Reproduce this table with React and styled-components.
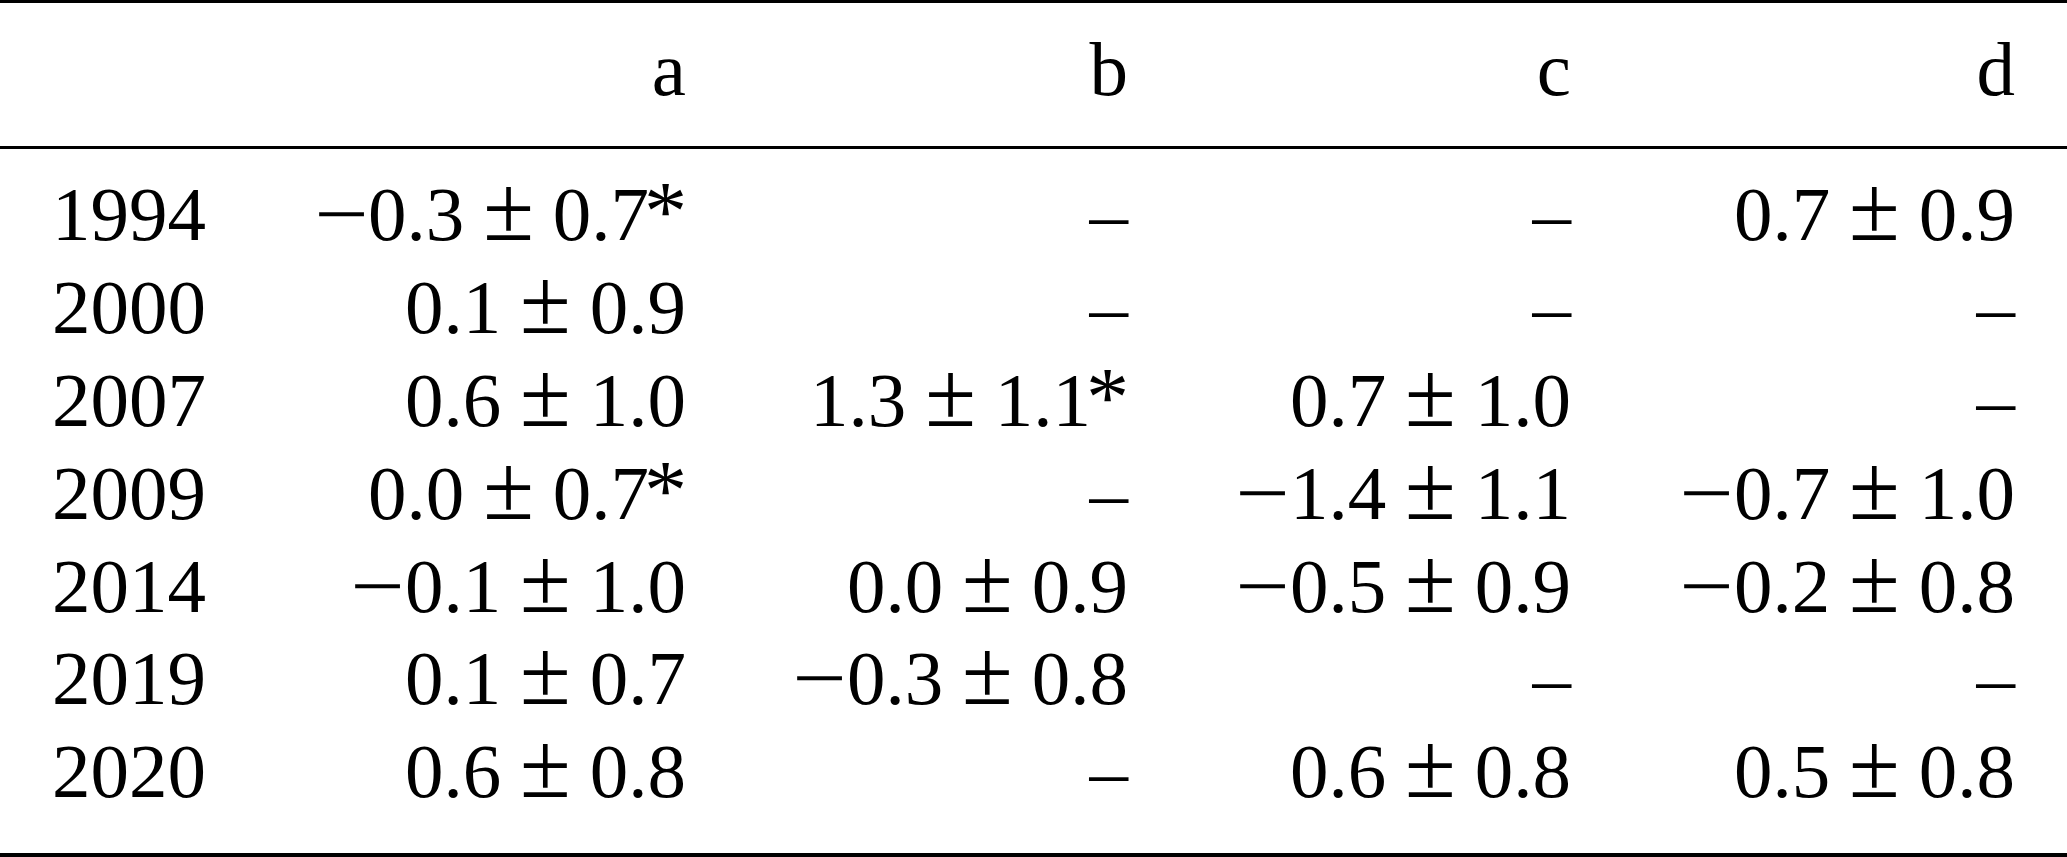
import React from "react";
import styled, { createGlobalStyle } from "styled-components";

const Global = createGlobalStyle`
  html, body { margin: 0; padding: 0; background: #fff; }
  body {
    font-family: "Liberation Serif", "Times New Roman", serif;
    color: #000;
  }
`;

const Table = styled.div`
  width: 100%;
  box-sizing: border-box;
  border-top: 3px solid #000;
  border-bottom: 4px solid #000;
  font-size: 77px;
  line-height: 92.8px;
`;

const Head = styled.div`
  padding: 20px 52px 30px;
  border-bottom: 3px solid #000;
`;

const Body = styled.div`
  padding: 19.6px 52px 35px;
`;

const Row = styled.div`
  display: grid;
  grid-template-columns: 192px 442px 442px 443px 444px;
  white-space: nowrap;
`;

const Cell = styled.div`
  text-align: ${(p) => (p.$align === "left" ? "left" : "right")};
`;

const Minus = styled.span`
  display: inline-block;
  line-height: 0;
  transform: scaleX(1.25);
  transform-origin: right center;
`;

const PM = styled.span`
  font-size: 1.2em;
  line-height: 0;
  margin: 0 0.205em;
`;

const Star = styled.span`
  display: inline-block;
  line-height: 0;
  transform: scale(1.12, 1.1);
  transform-origin: left 0.3em;
  margin-left: -0.06em;
  margin-right: 0.04em;
`;

const Dash = styled.span``;

const data = [
  ["1994", ["-0.3", "0.7", true], null, null, ["0.7", "0.9"]],
  ["2000", ["0.1", "0.9"], null, null, null],
  ["2007", ["0.6", "1.0"], ["1.3", "1.1", true], ["0.7", "1.0"], null],
  ["2009", ["0.0", "0.7", true], null, ["-1.4", "1.1"], ["-0.7", "1.0"]],
  ["2014", ["-0.1", "1.0"], ["0.0", "0.9"], ["-0.5", "0.9"], ["-0.2", "0.8"]],
  ["2019", ["0.1", "0.7"], ["-0.3", "0.8"], null, null],
  ["2020", ["0.6", "0.8"], null, ["0.6", "0.8"], ["0.5", "0.8"]],
];

function Value({ v }) {
  if (!v) return <Dash>–</Dash>;
  const [m, e, star] = v;
  const neg = m.startsWith("-");
  return (
    <>
      {neg && <Minus>{"\u2212"}</Minus>}
      {neg ? m.slice(1) : m}
      <PM>±</PM>
      {e}
      {star && <Star>*</Star>}
    </>
  );
}

export default function App() {
  return (
    <>
      <Global />
      <Table>
        <Head>
          <Row>
            <Cell $align="left" />
            <Cell>a</Cell>
            <Cell>b</Cell>
            <Cell>c</Cell>
            <Cell>d</Cell>
          </Row>
        </Head>
        <Body>
          {data.map(([year, ...vals]) => (
            <Row key={year}>
              <Cell $align="left">{year}</Cell>
              {vals.map((v, i) => (
                <Cell key={i}>
                  <Value v={v} />
                </Cell>
              ))}
            </Row>
          ))}
        </Body>
      </Table>
    </>
  );
}
